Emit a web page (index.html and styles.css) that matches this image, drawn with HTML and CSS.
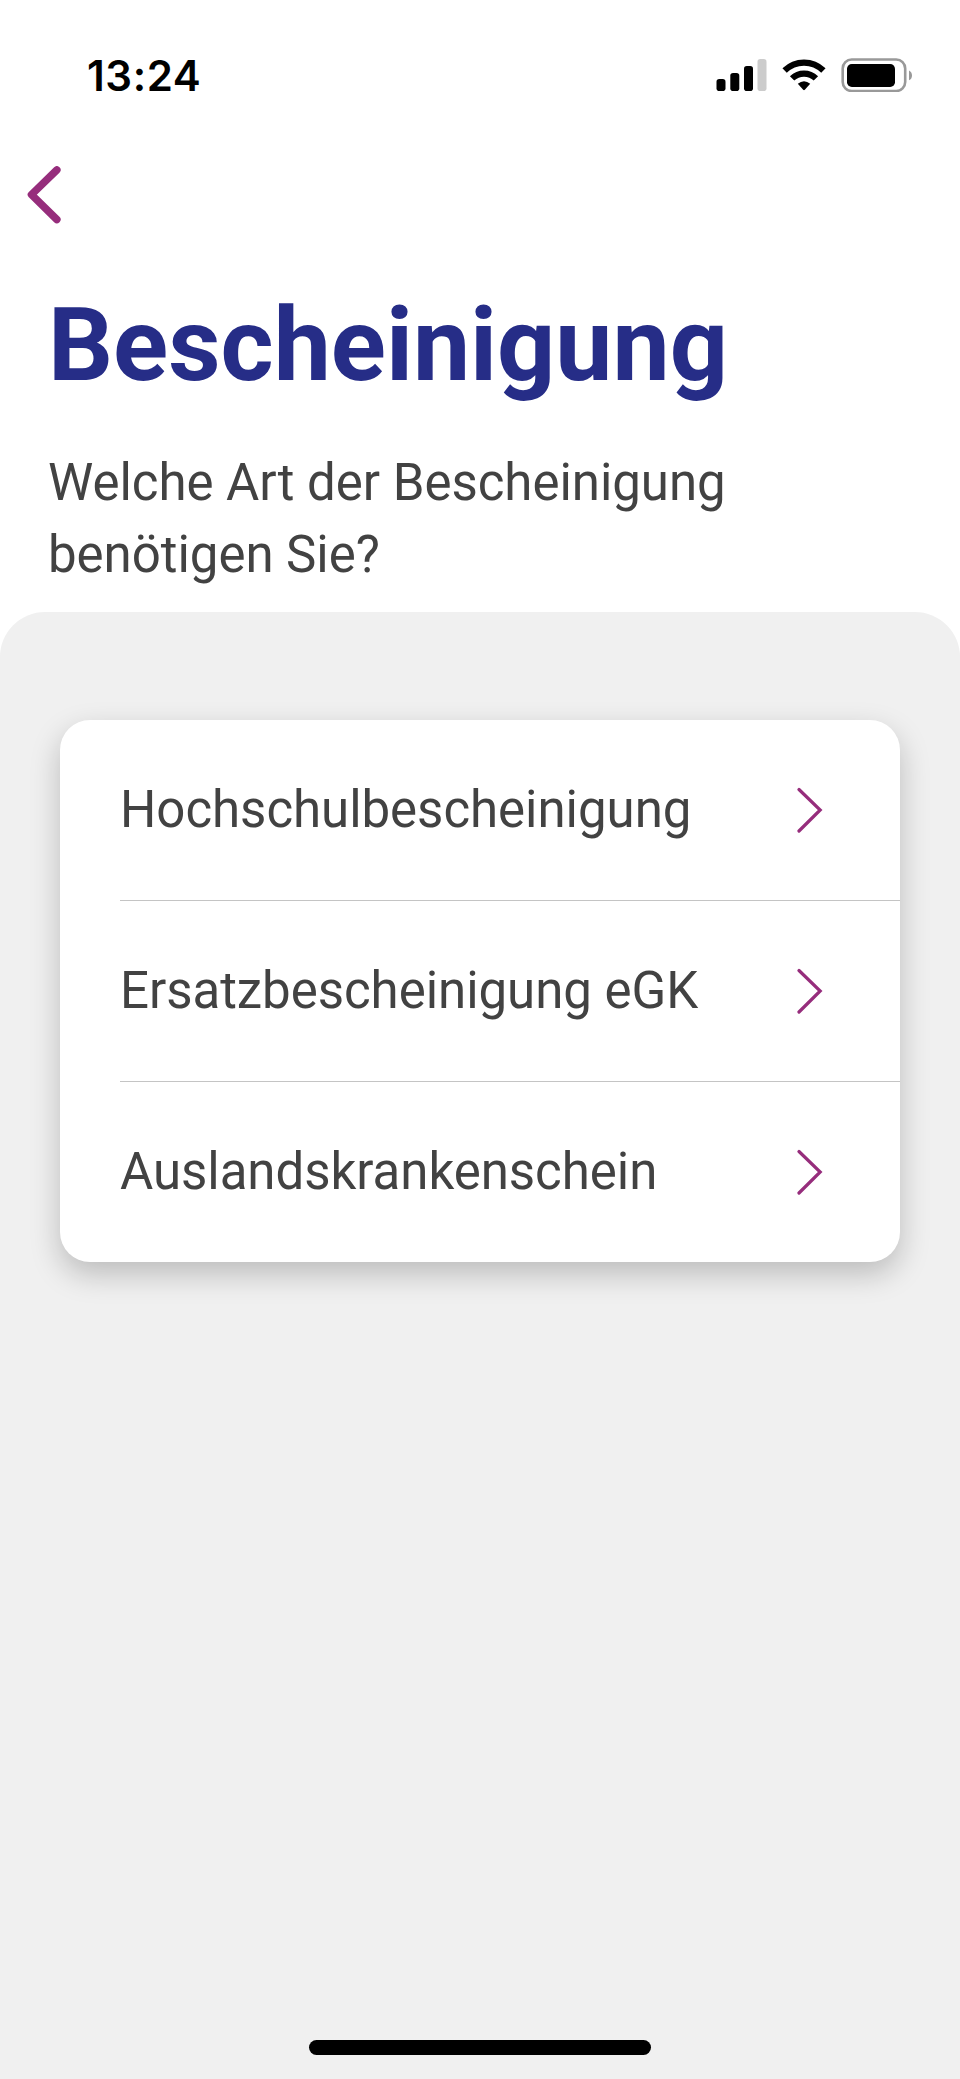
FILE: index.html
```html
<!DOCTYPE html>
<html lang="de">
<head>
<meta charset="utf-8">
<meta name="viewport" content="width=device-width">
<title>Bescheinigung</title>
<link rel="stylesheet" href="styles.css">
</head>
<body>
<div class="screen">
  <div class="status-bar">
    <span class="time">13:24</span>
    <div class="status-icons">
      <svg width="51" height="34" viewBox="0 0 51 34">
        <rect x="0.5" y="21" width="9" height="12" rx="2.8"/>
        <rect x="14.3" y="15" width="9" height="18" rx="2.8"/>
        <rect x="28" y="8" width="9" height="25" rx="2.8"/>
        <rect x="41.5" y="1" width="9" height="32" rx="2.8" fill="#ccc"/>
      </svg>
      <svg width="44" height="34" viewBox="0 0 44 34">
        <path d="M2.6 12.5A27.6 27.6 0 0 1 41.4 12.5M10.1 20.4A17 17 0 0 1 33.9 20.4" fill="none" stroke="#000" stroke-width="6.2"/>
        <path d="M15.8 25.8Q22 20.6 28.2 25.8L22.8 31.8Q22 32.6 21.2 31.8Z"/>
      </svg>
      <svg width="72" height="34" viewBox="0 0 72 34">
        <rect x="1.7" y="1.5" width="62.5" height="31.5" rx="9" fill="none" stroke="#999" stroke-width="2.6"/>
        <rect x="6" y="6" width="48" height="23" rx="4.8"/>
        <path d="M68 12.5Q71 14 71 17.5T68 22.3Z" fill="#999"/>
      </svg>
    </div>
  </div>
  <nav class="nav">
    <svg width="35" height="58" viewBox="0 0 35 58"><path d="M29.8 4L4.5 28.6L29.8 53.5" fill="none" stroke="#962d7c" stroke-width="7.6" stroke-linecap="round" stroke-linejoin="round"/></svg>
  </nav>
  <header class="header">
    <h1 class="title">Bescheinigung</h1>
    <p class="question">Welche Art der Bescheinigung benötigen Sie?</p>
  </header>
  <main class="sheet">
    <ul class="list">
      <li class="item"><span>Hochschulbescheinigung</span><svg width="28" height="46" viewBox="0 0 28 46"><path d="M3 2.5L24.2 23L3 44" fill="none" stroke="#962d7c" stroke-width="3.2" stroke-linecap="round"/></svg></li>
      <li class="item"><span>Ersatzbescheinigung eGK</span><svg width="28" height="46" viewBox="0 0 28 46"><path d="M3 2.5L24.2 23L3 44" fill="none" stroke="#962d7c" stroke-width="3.2" stroke-linecap="round"/></svg></li>
      <li class="item"><span>Auslandskrankenschein</span><svg width="28" height="46" viewBox="0 0 28 46"><path d="M3 2.5L24.2 23L3 44" fill="none" stroke="#962d7c" stroke-width="3.2" stroke-linecap="round"/></svg></li>
    </ul>
    <div class="home-indicator"></div>
  </main>
</div>
</body>
</html>
```
FILE: styles.css
```css
* { box-sizing: border-box; }

body {
  margin: 0;
  background: #fff;
  color: #424242;
  font-family: Roboto, "Liberation Sans", sans-serif;
}

.screen {
  display: flex;
  flex-direction: column;
  height: 2079px;
}

.status-bar {
  display: flex;
  justify-content: space-between;
  height: 150px;
  padding: 51px 47px 0 87px;
}

.time {
  color: #000;
  font: 600 42px/50px Inter, sans-serif;
  letter-spacing: 0.6px;
}

.status-icons {
  display: flex;
  gap: 15px;
  padding-top: 7px;
}

.nav {
  height: 135px;
  padding: 16px 0 0 27px;
}

.nav svg { display: block; }

.header {
  height: 327px;
  padding: 0 48px;
}

.title {
  margin: 0 0 42px;
  color: #262d87;
  font-size: 102px;
  font-weight: 700;
  line-height: 120px;
}

.question {
  margin: 0;
  font-size: 51px;
  letter-spacing: -0.04px;
  line-height: 72px;
}

.sheet {
  display: flex;
  flex: 1;
  flex-direction: column;
  align-items: center;
  justify-content: space-between;
  padding: 108px 60px 24px;
  border-radius: 45px 45px 0 0;
  background: #f0f0f0;
}

.list {
  width: 100%;
  margin: 0;
  padding: 0 0 0 60px;
  border-radius: 30px;
  background: #fff;
  box-shadow: 0 12px 30px rgba(0, 0, 0, 0.22);
  list-style: none;
}

.item {
  display: flex;
  align-items: center;
  justify-content: space-between;
  height: 181px;
  padding-right: 76px;
  font-size: 51px;
  letter-spacing: -0.04px;
}

.item span { padding-bottom: 2px; }

.item + .item { border-top: 1px solid #c4c4c4; }

.item:first-child { height: 180px; }

.home-indicator {
  width: 342px;
  height: 15px;
  border-radius: 8px;
  background: #000;
}
```
